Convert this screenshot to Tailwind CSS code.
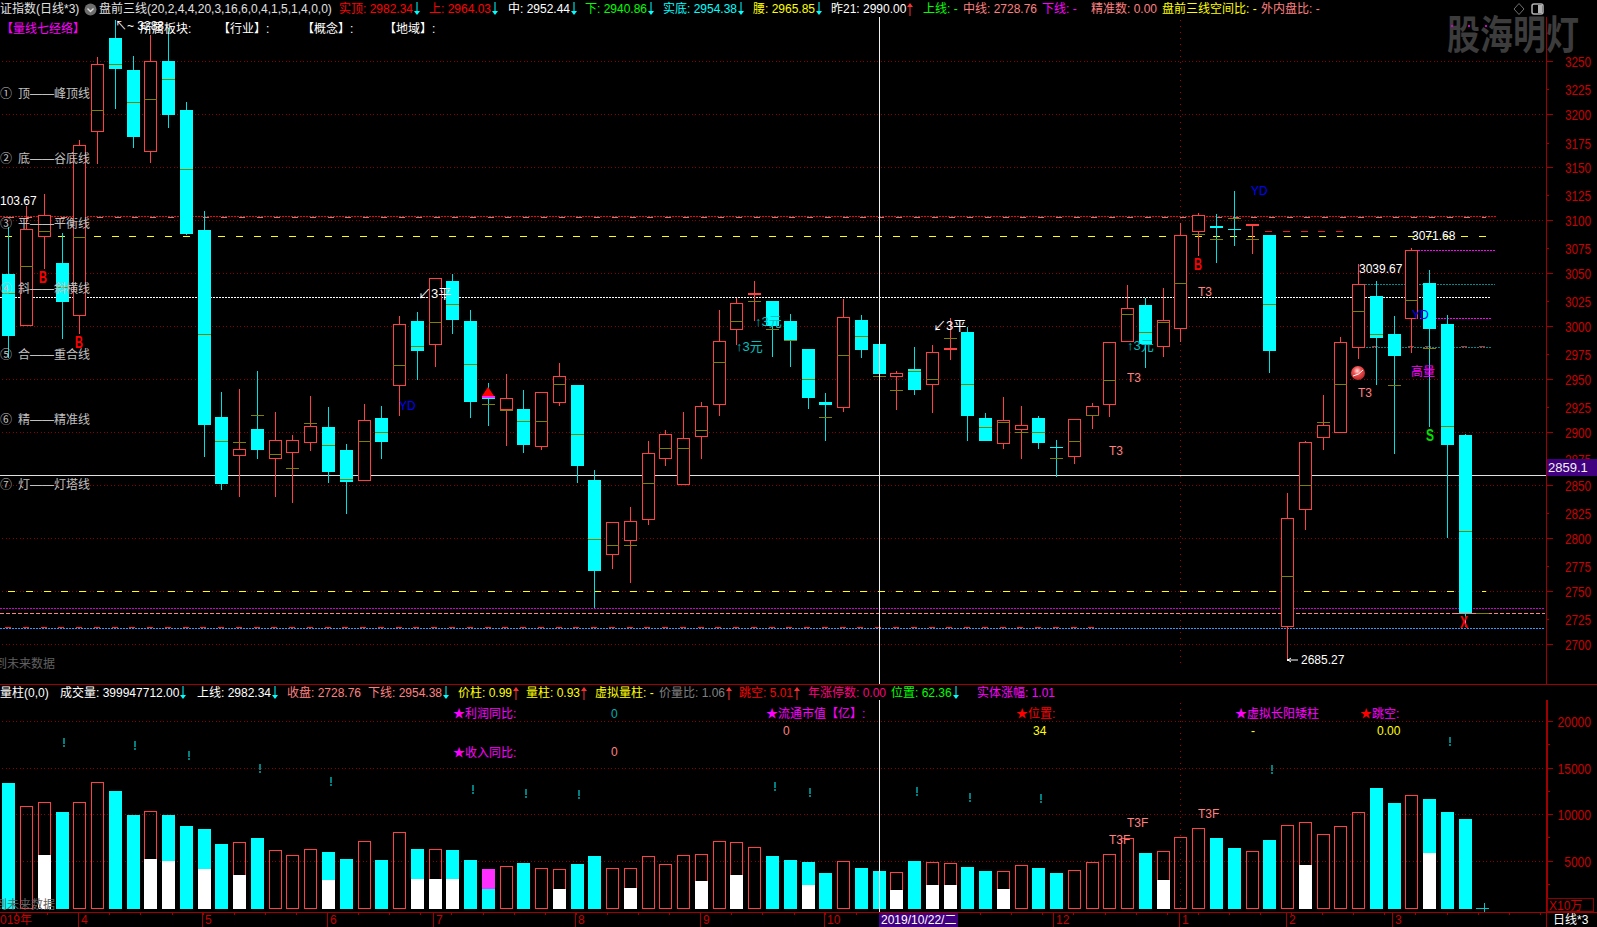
<!DOCTYPE html>
<html lang="zh">
<head>
<meta charset="UTF-8">
<title>盘前三线 日线</title>
<script src="https://cdn.jsdelivr.net/npm/@tailwindcss/browser@4"></script>
</head>
<body class="bg-black">
<div class="relative w-[1597px] h-[927px] bg-black overflow-hidden text-[12px] leading-none font-['Liberation_Sans','Noto_Sans_CJK_SC',sans-serif]">

  <!-- top status row -->
  <div id="statusBar" class="flex items-center h-[17px] pt-[1px] whitespace-nowrap relative z-10"></div>
  <div class="absolute left-[1513px] top-[2px] z-10 flex gap-[6px] items-center">
    <svg width="12" height="14" viewBox="0 0 12 14"><path d="M6 1.5 L11 7 L6 12.5 L1 7 Z" fill="none" stroke="#707070"/></svg>
    <svg width="13" height="12" viewBox="0 0 13 12"><rect x="1" y="1" width="11" height="10" rx="2" fill="none" stroke="#b0b0b0" stroke-width="1.5"/><rect x="7" y="2" width="4" height="8" fill="#b0b0b0"/></svg>
  </div>

  <!-- price pane -->
  <div class="relative h-[667px]">
    <svg id="pricePane" class="block absolute inset-0" width="1597" height="667" viewBox="0 17 1597 667"></svg>
    <div class="absolute left-[1447px] top-[-3px] text-[33px] leading-[44px] font-bold text-[#3c3c3c] whitespace-nowrap scale-y-[1.2]">股海明灯</div>
    <div class="absolute left-[1451px] top-[8px] flex gap-[15px]">
      <span class="w-[2px] h-[2px] bg-[#d000d0]"></span><span class="w-[2px] h-[2px] bg-[#d000d0]"></span><span class="w-[2px] h-[2px] bg-[#d000d0]"></span>
    </div>
    <div class="absolute left-0 top-[6px] flex items-center h-[12px] whitespace-nowrap text-white">
      <span class="w-[140px] pl-[1px] text-[#ff00ff]">【量线七经络】</span>
      <span class="w-[78px]">所属板块:</span>
      <span class="w-[84px]">【行业】:</span>
      <span class="w-[82px]">【概念】:</span>
      <span>【地域】:</span>
    </div>
    <div class="absolute left-[1547px] top-[442px] w-[50px] h-[17px] bg-[#40007f] text-[#f0f0f0] flex items-center pl-[1px] text-[13px] z-10">2859.1</div>
  </div>

  <!-- indicator row -->
  <div id="indicatorBar" class="relative z-10 flex items-center h-[16px] border-t border-[#a00000] bg-black whitespace-nowrap"></div>

  <!-- volume pane with time axis -->
  <svg id="volumePane" class="block" width="1597" height="227" viewBox="0 700 1597 227"></svg>
</div>

<script>
  // status row items: [width, text, colour class, arrow]
  const statusItems = [
    [84, '证指数(日线*3)', 'text-[#e0e0e0]', ''],
    [15, '', '', 'ball'],
    [240, '盘前三线(20,2,4,4,20,3,16,6,0,4,1,5,1,4,0,0)', 'text-[#e0e0e0]', ''],
    [90, '实顶: 2982.34', 'text-[#ff0000]', 'down'],
    [79, '上: 2964.03', 'text-[#ff0000]', 'down'],
    [77, '中: 2952.44', 'text-white', 'down'],
    [78, '下: 2940.86', 'text-[#00ff00]', 'down'],
    [90, '实底: 2954.38', 'text-[#00ffff]', 'down'],
    [78, '腰: 2965.85', 'text-[#ffff00]', 'down'],
    [92, '昨21: 2990.00', 'text-white', 'up'],
    [40, '上线: -', 'text-[#00ff00]', ''],
    [79, '中线: 2728.76', 'text-[#ff8080]', ''],
    [49, '下线: -', 'text-[#ff00ff]', ''],
    [71, '精准数: 0.00', 'text-[#ff8080]', ''],
    [99, '盘前三线空间比: -', 'text-[#ffff00]', ''],
    [80, '外内盘比: -', 'text-[#ff8080]', '']
  ];

  const indicatorItems = [
    [60, '量柱(0,0)', 'text-white', ''],
    [137, '成交量: 399947712.00', 'text-white', 'down'],
    [90, '上线: 2982.34', 'text-white', 'down'],
    [81, '收盘: 2728.76', 'text-[#ff8080]', ''],
    [90, '下线: 2954.38', 'text-[#ff8080]', 'down'],
    [68, '价柱: 0.99', 'text-[#ffff00]', 'up'],
    [69, '量柱: 0.93', 'text-[#ffff00]', 'up'],
    [64, '虚拟量柱: -', 'text-[#ffff00]', ''],
    [80, '价量比: 1.06', 'text-[#808080]', 'up'],
    [69, '跳空: 5.01', 'text-[#ff0000]', 'up'],
    [83, '年涨停数: 0.00', 'text-[#ff0080]', ''],
    [86, '位置: 62.36', 'text-[#00ff00]', 'down'],
    [85, '实体涨幅: 1.01', 'text-[#ff00ff]', '']
  ];

  function arrowSvg(kind) {
    if (kind === 'down') return '<svg class="shrink-0 ml-[1px]" width="6" height="14" viewBox="0 0 6 14"><path d="M3 0V9" stroke="#00ffff" fill="none"/><path d="M0 9H6L3 13Z" fill="#00ffff"/></svg>';
    if (kind === 'up') return '<svg class="shrink-0 ml-[1px]" width="6" height="14" viewBox="0 0 6 14"><path d="M3 4V14" stroke="#ff3030" fill="none"/><path d="M0 5H6L3 1Z" fill="#ff3030"/></svg>';
    if (kind === 'ball') return '<svg class="shrink-0" width="13" height="13" viewBox="0 0 13 13"><circle cx="6.5" cy="6.5" r="6" fill="#6e6e6e"/><path d="M3.5 5.5L6.5 8.5L9.5 5.5" stroke="#e0e0e0" stroke-width="1.4" fill="none"/></svg>';
    return '';
  }

  function fillRow(id, items) {
    document.getElementById(id).innerHTML = items.map(([w, text, cls, arrow]) =>
      `<div class="flex items-center shrink-0 ${cls}" style="width:${w}px"><span>${text}</span>${arrowSvg(arrow)}</div>`
    ).join('');
  }
  fillRow('statusBar', statusItems);
  fillRow('indicatorBar', indicatorItems);

  // candles: [wickTop, wickBottom, bodyTop, bodyBottom, midDash, 'c' falling / 'r' rising]
  const candles = [
    [227,358,274,336,293,'c'],[206,326,229,326,266,'r'],[194,269,215,237,231,'r'],[233,339,263,302,287,'c'],
    [140,334,145,316,237,'r'],[57,164,64,132,110,'r'],[20,109,38,69,64,'c'],[56,148,70,137,102,'c'],
    [35,163,61,152,99,'r'],[28,128,61,115,79,'c'],[102,235,110,234,169,'c'],[211,457,230,425,334,'c'],
    [392,490,417,484,441,'c'],[389,497,449,456,442,'r'],[371,459,429,450,415,'c'],[412,497,440,459,454,'r'],
    [435,503,440,453,468,'r'],[396,451,426,443,423,'r'],[407,483,427,472,445,'c'],[444,514,450,482,479,'c'],
    [404,481,420,481,441,'r'],[406,459,418,442,432,'c'],[316,416,324,386,365,'r'],[312,380,321,351,346,'c'],
    [278,367,278,345,322,'r'],[274,334,281,320,304,'c'],[310,418,321,402,364,'c'],[383,426,397,399,404,'c'],
    [374,446,398,410,410,'r'],[390,453,409,445,421,'c'],[392,450,392,447,421,'r'],[363,406,376,403,384,'r'],
    [385,483,385,466,434,'c'],[470,608,480,571,539,'c'],[522,569,522,555,545,'r'],[507,583,521,541,545,'r'],
    [441,525,453,520,483,'r'],[430,466,434,459,448,'r'],[412,485,438,485,448,'r'],[402,459,406,437,430,'r'],
    [310,416,341,405,362,'r'],[298,345,303,330,321,'r'],[281,321,293,295,301,'r'],[301,357,301,326,329,'c'],
    [314,367,321,341,340,'c'],[349,409,349,398,379,'c'],[393,441,402,405,417,'c'],[299,412,317,408,355,'r'],
    [315,358,320,350,336,'c'],[339,413,344,374,376,'c'],[371,410,373,377,390,'r'],[347,395,369,390,371,'c'],
    [345,413,352,385,379,'r'],[318,360,348,350,338,'r'],[327,441,332,416,384,'c'],[413,441,418,441,427,'c'],
    [397,449,420,444,422,'r'],[406,459,425,430,432,'r'],[416,449,418,443,432,'c'],[440,477,447,448,458,'c'],
    [419,464,419,457,441,'r'],[403,429,406,416,415,'r'],[342,417,342,405,380,'r'],[285,342,308,342,314,'r'],
    [298,368,305,344,332,'c'],[288,357,320,347,322,'r'],[223,342,235,329,283,'r'],[213,256,215,232,234,'r'],
    [214,263,226,228,239,'c'],[191,246,229,230,218,'c'],[224,254,224,226,239,'r'],[235,373,235,351,304,'c'],
    [493,659,518,627,576,'r'],[441,530,442,510,485,'r'],[395,450,425,438,422,'r'],[337,433,342,433,384,'r'],
    [264,359,284,348,311,'r'],[281,385,296,338,334,'c'],[316,454,334,356,385,'c'],[248,353,250,319,300,'r'],
    [270,427,283,329,348,'c'],[315,538,324,445,426,'c'],[434,627,435,613,531,'c']
  ];
  const candleX = i => Math.round(8.3 + 17.76 * i);

  // volume bars per candle: [top in zoom units, 'c'/'r'/'m', top of white part]
  const volumes = [
    [189,'c'],[259,'r'],[247,'r',405],[276,'c'],[247,'r'],[187,'r'],[213,'c'],[285,'c'],[274,'r',417],[285,'c',423],
    [318,'c'],[327,'c',447],[372,'c'],[367,'r',465],[354,'c'],[391,'r'],[406,'r'],[388,'r'],[396,'c',480],[417,'c'],
    [364,'r'],[420,'c'],[337,'r'],[387,'c',477],[388,'r',477],[390,'c',477],[420,'c'],[447,'m'],[439,'r'],[429,'c'],
    [445,'r'],[448,'r',507],[432,'c'],[408,'c'],[445,'r'],[445,'r',504],[409,'r'],[433,'r'],[406,'r'],[403,'r',483],
    [364,'r'],[367,'r',465],[382,'r'],[408,'c'],[420,'c'],[426,'c',495],[459,'c'],[424,'r'],[444,'c'],[453,'c'],
    [457,'r',510],[423,'c'],[427,'r',495],[430,'r',495],[441,'c'],[453,'c'],[454,'r',507],[436,'r'],[444,'c'],[459,'c'],
    [451,'r'],[427,'r'],[403,'r'],[355,'r'],[399,'c'],[394,'r',480],[352,'r'],[325,'r'],[354,'c'],[384,'c'],
    [394,'r'],[360,'c'],[316,'r'],[307,'r',435],[343,'r'],[319,'r'],[277,'r'],[204,'c'],[249,'c'],[226,'r'],
    [237,'c',399],[276,'c'],[297,'c']
  ];

  const RED = '#ff4040', CYAN = '#00ffff', OLIVE = '#808000', GRID = '#8c0000', AXIS = '#c80000';

  const hLine = (y, x1, x2, stroke, dash) =>
    `<line x1="${x1}" x2="${x2}" y1="${y + 0.5}" y2="${y + 0.5}" stroke="${stroke}" ${dash ? `stroke-dasharray="${dash}"` : ''} shape-rendering="crispEdges"/>`;
  const vLine = (x, y1, y2, stroke, dash) =>
    `<line x1="${x + 0.5}" x2="${x + 0.5}" y1="${y1}" y2="${y2}" stroke="${stroke}" ${dash ? `stroke-dasharray="${dash}"` : ''} shape-rendering="crispEdges"/>`;
  const box = (x, y, w, h, fill) => `<rect x="${x}" y="${y}" width="${w}" height="${h}" fill="${fill}" shape-rendering="crispEdges"/>`;
  const frame = (x, y, w, h, stroke) =>
    `<rect x="${x + 0.5}" y="${y + 0.5}" width="${w - 1}" height="${h - 1}" fill="none" stroke="${stroke}" shape-rendering="crispEdges"/>`;
  const label = (x, cy, str, fill, size = 12, extra = '') =>
    `<text x="${x}" y="${cy + size * 0.36}" fill="${fill}" font-size="${size}" ${extra}>${str}</text>`;
  const axisNum = (x, cy, str, len) =>
    `<text x="${x}" y="${cy + 5.5}" fill="${AXIS}" font-size="15" textLength="${len}" lengthAdjust="spacingAndGlyphs">${str}</text>`;
  const bigMark = (x, cy, str, fill) =>
    `<text x="${x}" y="${cy + 6}" fill="${fill}" font-size="17" font-weight="bold" textLength="8" lengthAdjust="spacingAndGlyphs">${str}</text>`;

  function drawPrice() {
    let s = '';
    // grid
    [61, 114, 167, 220, 273, 326, 379, 432, 485, 538, 591, 644].forEach(y => { s += hLine(y, 2, 1546, GRID, '1 2.5'); });
    s += vLine(1180, 20, 668, '#b00000', '1 5');
    s += vLine(1546, 0, 684, '#a00000');

    // price axis
    const prices = [[3250,61],[3225,89],[3200,114],[3175,143],[3150,167],[3125,195],[3100,220],[3075,248],[3050,273],[3025,301],[3000,326],[2975,354],[2950,379],[2925,407],[2900,432],[2875,459],[2850,485],[2825,513],[2800,538],[2775,566],[2750,591],[2725,619],[2700,644]];
    prices.forEach(([p, y]) => {
      const major = p % 50 === 0;
      s += hLine(y, 1546, major ? 1553 : 1549, '#a00000');
      s += axisNum(1565, y, p, 26);
    });

    // long horizontal levels, under the candles
    s += hLine(217, 8, 1486, '#909090', '6 11.76');
    s += hLine(216, 0, 1497, '#ff0000', '2 1');
    s += hLine(236, 5, 1486, '#ffff00', '7 10.76');
    s += hLine(231, 1265, 1344, '#e02020', '7 10.76');
    s += hLine(297, 0, 1491, '#ffffff', '2 1');
    s += hLine(475, 0, 1546, '#e0e0e0');
    s += hLine(591, 8, 1486, '#ffff00', '7 10.76');
    s += hLine(608, 0, 1545, '#d000d0', '2 1');
    s += hLine(613, 0, 1545, '#ff8080', '4 2');
    s += hLine(627, 5, 1094, '#ff2020', '6 11.76');
    s += hLine(628, 0, 1545, '#3399ff', '2 1');
    s += hLine(250, 1418, 1496, '#ff00ff', '2 1');
    s += hLine(318, 1420, 1492, '#ff00ff', '2 1');
    s += hLine(284, 1365, 1495, '#008c8c', '2 1');
    s += hLine(347, 1366, 1492, '#008c8c', '2 1');
    s += hLine(346, 1372, 1492, '#e02020', '6 11.76');

    // candles
    candles.forEach(([wt, wb, bt, bb, mid, kind], i) => {
      const x = candleX(i);
      const color = kind === 'c' ? CYAN : RED;
      const wick = kind === 'c' ? '#00e0e0' : RED;
      s += vLine(x, wt, wb, wick);
      if (kind === 'c' || bb - bt <= 3) {
        s += box(x - 6, bt, 13, bb - bt, color);
      } else {
        s += box(x - 6, bt, 13, bb - bt, '#000000');
        s += frame(x - 6, bt, 13, bb - bt, color);
      }
      s += hLine(mid, x - 6, x + 7, OLIVE);
    });
    s += hLine(613, 1476, 1489, OLIVE);
    s += hLine(613, 1454, 1476, '#ff8080');

    // crosshair
    s += vLine(879, 16, 684, '#f0f0f0');

    // marks on the chart
    s += bigMark(39, 277, 'B', '#ff0000');
    s += bigMark(75, 342, 'B', '#ff0000');
    s += bigMark(1194, 264, 'B', '#ff0000');
    s += bigMark(1426, 435, 'S', '#00e000');
    s += bigMark(1460, 622, 'X', '#ff0000');
    [[1127, 378], [1198, 292], [1109, 451], [1358, 393]].forEach(([x, y]) => { s += label(x, y, 'T3', '#ff8080'); });
    [[1251, 191], [399, 406], [1412, 315]].forEach(([x, y]) => { s += label(x, y, 'YD', '#0000ff'); });
    s += label(418, 293, '↙3平', '#ffffff', 13);
    s += label(933, 325, '↙3平', '#ffffff', 13);
    s += label(736, 346, '↑3元', '#00c0c0', 13);
    s += label(755, 321, '↑3元', '#00c0c0', 13);
    s += label(1127, 345, '↑3元', '#00c0c0', 13);
    s += label(1359, 269, '3039.67', '#ffffff');
    s += label(1412, 236, '3071.68', '#ffffff');
    s += `<path d="M1288 660H1298M1288 660L1291 658M1288 660L1291 662" stroke="#ffffff" fill="none"/>` + box(1287, 659, 2, 2, '#ffffff');
    s += label(1301, 660, '2685.27', '#ffffff');
    s += label(1411, 372, '高量', '#ff00ff');
    s += label(115, 26, '↖~ 3288', '#ffffff');
    s += label(0, 201, '103.67', '#ffffff');
    s += label(-5, 664, '到未来数据', '#606060');

    // ball
    s += `<defs><radialGradient id="ballFill" cx="45%" cy="35%" r="70%"><stop offset="0" stop-color="#ffe0e0"/><stop offset="0.4" stop-color="#ee5050"/><stop offset="1" stop-color="#b02020"/></radialGradient></defs>`;
    s += `<circle cx="1358" cy="373" r="7" fill="url(#ballFill)"/><path d="M1353 376Q1359 375 1363 370" stroke="#ffffff" fill="none"/>`;

    // red tip on the doji
    s += `<path d="M482 396L488 387L494 396Z" fill="#ff0000"/>` + box(482, 396, 13, 2, '#ff20ff');

    // seven rule labels on the left
    [['①', '顶——峰顶线', 94], ['②', '底——谷底线', 159], ['③', '平——平衡线', 224], ['④', '斜——斜横线', 289],
     ['⑤', '合——重合线', 355], ['⑥', '精——精准线', 420], ['⑦', '灯——灯塔线', 485]].forEach(([n, t, y]) => {
      s += label(0, y, n, '#c0c0c0');
      s += label(18, y, t, '#c0c0c0');
    });
    document.getElementById('pricePane').innerHTML = s;
  }

  function drawVolume() {
    let s = '';
    [721, 768, 814, 861].forEach(y => { s += hLine(y, 2, 1546, GRID, '1 2.5'); });
    s += vLine(1180, 703, 912, '#b00000', '1 5');
    s += vLine(1546, 684, 927, '#a00000');
    s += vLine(1547, 700, 912, '#a00000');

    // volume axis
    [[20000, 721], [15000, 768], [10000, 814], [5000, 861]].forEach(([v, y]) => {
      const len = String(v).length * 6.7;
      s += hLine(y, 1547, 1553, '#a00000');
      s += axisNum(1591 - len, y, v, len);
      s += hLine(y + 23, 1547, 1550, '#a00000');
    });
    s += frame(1547, 898, 47, 14, '#8c0000');
    s += label(1549, 906, 'X10万', AXIS);

    // bars
    const BASE = 909;
    volumes.forEach(([z, kind, whiteZ], i) => {
      const x = candleX(i);
      const top = Math.round(720 + z / 3);
      if (kind === 'r') s += frame(x - 6, top, 13, BASE - top, RED);
      else if (kind === 'm') s += box(x - 6, top, 13, BASE - top, CYAN) + box(x - 6, top, 13, 20, '#ff30ff');
      else s += box(x - 6, top, 13, BASE - top, CYAN);
      if (whiteZ) {
        const wt = Math.round(720 + whiteZ / 3);
        s += box(x - 6, wt, 13, BASE - wt, '#ffffff');
      }
    });

    // teal exclamation marks
    [[64,738],[135,741],[189,751],[260,764],[331,777],[473,785],[526,789],[579,790],[775,782],[810,788],[917,787],[970,793],[1041,794],[1272,765],[1450,737]].forEach(([x, y]) => {
      s += box(x - 1, y, 2, 6, '#008080') + box(x - 1, y + 7, 2, 2, '#008080');
    });

    // cross mark past the last bar
    s += hLine(908, 1476, 1489, '#00c8c8') + vLine(1484, 903, 912, '#00c8c8');

    // stat titles
    const star = (x, y, fill) => label(x, y, '★', fill);
    s += star(453, 714, '#ff00ff') + label(465, 714, '利润同比:', '#ff00ff');
    s += label(611, 714, '0', '#00b0b0');
    s += star(766, 714, '#ff00ff') + label(778, 714, '流通市值【亿】:', '#ff00ff');
    s += label(783, 731, '0', '#ff8080');
    s += star(1016, 714, '#ff0000') + label(1028, 714, '位置:', '#ff0000');
    s += label(1033, 731, '34', '#ffff00');
    s += star(1235, 714, '#ff00ff') + label(1247, 714, '虚拟长阳矮柱', '#ff00ff');
    s += label(1251, 731, '-', '#ffff00');
    s += star(1360, 714, '#ff0000') + label(1372, 714, '跳空:', '#ff00ff');
    s += label(1377, 731, '0.00', '#ffff00');
    s += star(453, 753, '#ff00ff') + label(465, 753, '收入同比:', '#ff00ff');
    s += label(611, 752, '0', '#ff8080');

    s += label(1109, 840, 'T3F', '#ff8080') + label(1127, 823, 'T3F', '#ff8080') + label(1198, 814, 'T3F', '#ff8080');
    s += label(-5, 905, '到未来数据', '#606060');

    // crosshair
    s += vLine(879, 700, 912, '#f0f0f0');

    // time axis
    s += hLine(912, 0, 1597, '#a00000');
    for (let x = 16; x < 1546; x += 31.1) s += vLine(Math.round(x), 912, 915, '#a00000');
    [[78, '4'], [202, '5'], [327, '6'], [433, '7'], [575, '8'], [700, '9'], [824, '10'], [1053, '12'], [1179, '1'], [1286, '2'], [1392, '3']].forEach(([x, t]) => {
      s += vLine(x, 912, 927, '#a00000');
      s += label(x + 3, 920, t, AXIS);
    });
    s += label(0, 920, '019年', AXIS);
    s += box(879, 913, 79, 14, '#40007f');
    s += label(881, 920, '2019/10/22/二', '#ffffff', 12);
    s += label(1553, 920, '日线*3', '#ffffff');
    document.getElementById('volumePane').innerHTML = s;
  }

  drawPrice();
  drawVolume();
</script>
</body>
</html>
